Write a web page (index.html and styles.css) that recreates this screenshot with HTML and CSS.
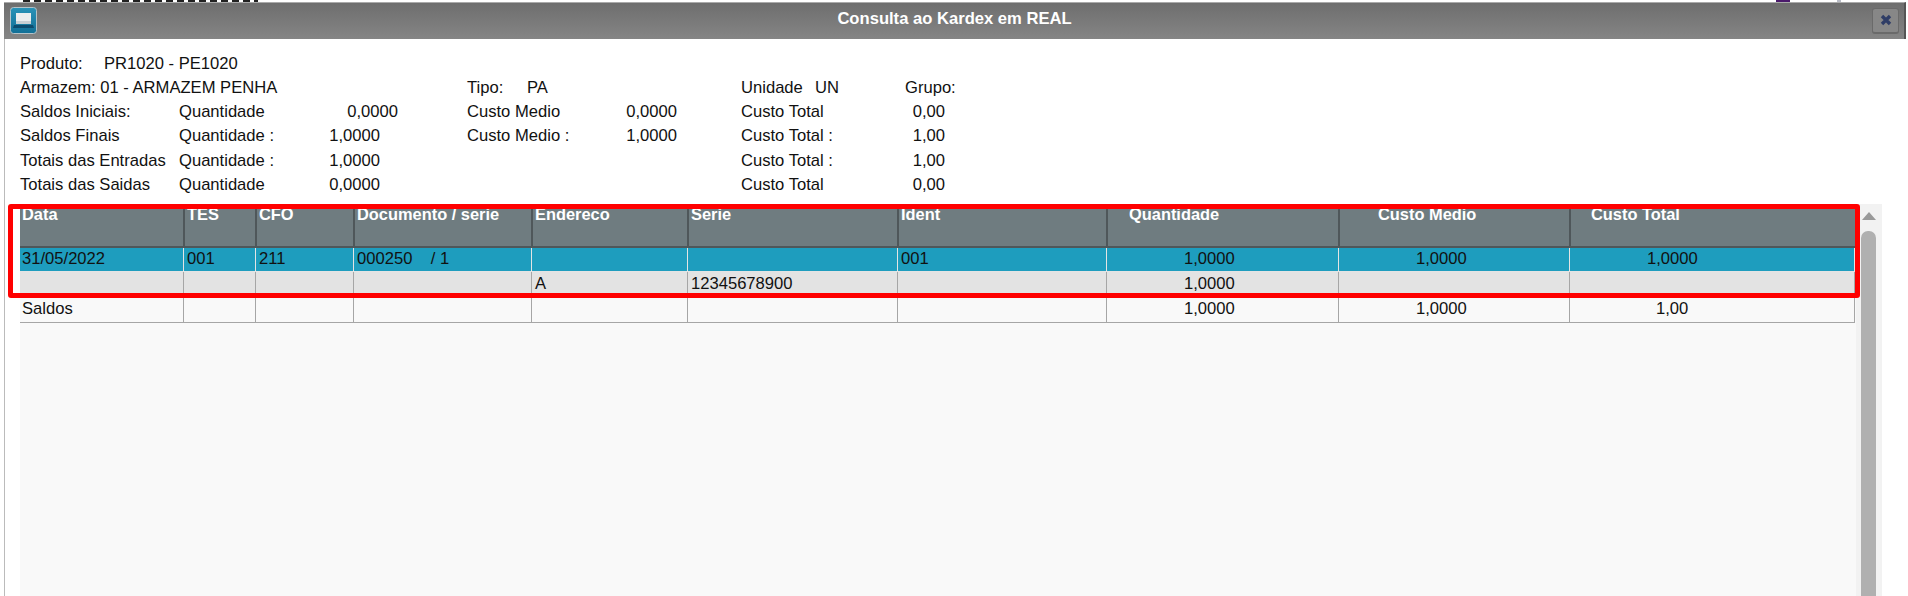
FILE: index.html
```html
<!DOCTYPE html>
<html lang="pt-BR">
  <head>
    <meta charset="UTF-8" />
    <title>Consulta ao Kardex em REAL</title>
    <link rel="stylesheet" href="styles.css">
  </head>
  <body>
    <div class="page-behind">
      <span class="behind-text"></span>
      <span class="behind-purple"></span>
      <span class="behind-mark"></span>
    </div>
    <div class="window">
      <div class="title-bar">
        <span class="app-icon">
          <svg width="27" height="27" viewBox="0 0 27 27">
            <defs>
              <linearGradient id="iconbg" x1="0" y1="0" x2="0" y2="1">
                <stop offset="0" stop-color="#2a93b8" />
                <stop offset="1" stop-color="#126f96" />
              </linearGradient>
            </defs>
            <rect x="0.5" y="0.5" width="26" height="26" rx="3" fill="url(#iconbg)" stroke="#b4c2c8" />
            <rect x="6" y="6" width="15" height="11" fill="#eceeef" />
            <rect x="6" y="14" width="15" height="3" fill="#c9d0d4" />
            <path d="M4 18h19l1 3H3z" fill="#0d4c6e" />
          </svg>
        </span>
        <span class="title-text">Consulta ao Kardex em REAL</span>
        <span class="close-btn">
          <svg width="12" height="12" viewBox="0 0 12 12">
            <path d="M2 2l8 8M10 2l-8 8" stroke="#2f3d66" stroke-width="3.4" />
          </svg>
        </span>
      </div>

      <div class="info">
        <div class="info-top">
          <span class="produto-label">Produto:</span><span>PR1020 - PE1020</span>
        </div>
        <div class="info-grid">
          <span class="wide">Armazem: 01 - ARMAZEM PENHA</span>
          <span><span class="tipo-label">Tipo:</span>PA</span>
          <span></span>
          <span><span class="unidade-label">Unidade</span>UN</span>
          <span class="grupo">Grupo:</span>

          <span>Saldos Iniciais:</span>
          <span>Quantidade</span>
          <span class="num val-far">0,0000</span>
          <span>Custo Medio</span>
          <span class="num val-mid">0,0000</span>
          <span>Custo Total</span>
          <span class="num">0,00</span>

          <span>Saldos Finais</span>
          <span>Quantidade :</span>
          <span class="num val-near">1,0000</span>
          <span>Custo Medio :</span>
          <span class="num val-mid">1,0000</span>
          <span>Custo Total :</span>
          <span class="num">1,00</span>

          <span>Totais das Entradas</span>
          <span>Quantidade :</span>
          <span class="num val-near">1,0000</span>
          <span></span>
          <span></span>
          <span>Custo Total :</span>
          <span class="num">1,00</span>

          <span>Totais das Saidas</span>
          <span>Quantidade</span>
          <span class="num val-near">0,0000</span>
          <span></span>
          <span></span>
          <span>Custo Total</span>
          <span class="num">0,00</span>
        </div>
      </div>

      <div class="grid-area">
        <div class="grid-scroll">
          <table class="kardex">
            <colgroup>
              <col class="c-data" /><col class="c-tes" /><col class="c-cfo" /><col class="c-doc" />
              <col class="c-end" /><col class="c-serie" /><col class="c-ident" />
              <col class="c-qtd" /><col class="c-medio" /><col class="c-total" />
            </colgroup>
            <thead>
              <tr>
                <th>Data</th>
                <th>TES</th>
                <th>CFO</th>
                <th>Documento / serie</th>
                <th>Endereco</th>
                <th>Serie</th>
                <th>Ident</th>
                <th class="th-qtd">Quantidade</th>
                <th class="th-medio">Custo Medio</th>
                <th class="th-total">Custo Total</th>
              </tr>
            </thead>
            <tbody>
              <tr class="row-selected">
                <td>31/05/2022</td>
                <td>001</td>
                <td>211</td>
                <td>000250 &nbsp;&nbsp; / 1</td>
                <td></td>
                <td></td>
                <td>001</td>
                <td class="num-cell">1,0000</td>
                <td class="num-cell">1,0000</td>
                <td class="num-cell">1,0000</td>
              </tr>
              <tr class="row-alt">
                <td></td>
                <td></td>
                <td></td>
                <td></td>
                <td>A</td>
                <td>12345678900</td>
                <td></td>
                <td class="num-cell">1,0000</td>
                <td></td>
                <td></td>
              </tr>
              <tr class="row-plain">
                <td>Saldos</td>
                <td></td>
                <td></td>
                <td></td>
                <td></td>
                <td></td>
                <td></td>
                <td class="num-cell">1,0000</td>
                <td class="num-cell">1,0000</td>
                <td class="num-cell total-short">1,00</td>
              </tr>
            </tbody>
          </table>
          <div class="highlight"></div>
        </div>
        <div class="scrollbar">
          <span class="arrow-up"></span>
          <span class="thumb"></span>
        </div>
      </div>
    </div>
  </body>
</html>
```

FILE: styles.css
```css
html, body {
  margin: 0;
  height: 596px;
  overflow: hidden;
  background: #fff;
}
body {
  font-family: "Liberation Sans", Arial, sans-serif;
  font-size: 16.6px;
  color: #111;
}

/* what shows of the page under the window */
.page-behind {
  height: 2px;
  display: flex;
}
.behind-text {
  width: 235px;
  margin-left: 23px;
  background: repeating-linear-gradient(90deg, #222 0 7px, #fff 7px 11px);
}
.behind-purple {
  width: 14px;
  margin-left: 1518px;
  background: #4b1a6b;
}
.behind-mark {
  width: 4px;
  margin-left: 47px;
  background: #b9bcc6;
}

.window {
  margin: 0 2px 0 4px;
  height: 594px;
  background: #fff;
  border-left: 1px solid #bbb;
  box-sizing: border-box;
}

/* title */
.title-bar {
  height: 37px;
  margin-left: -1px;
  background: linear-gradient(#6e6e6e, #858585);
  border-top: 1px solid #aaa;
  border-right: 2px solid #555;
  box-sizing: border-box;
  display: flex;
  align-items: center;
  justify-content: space-between;
  padding: 0 5px 1px 6px;
}
.app-icon {
  display: flex;
}
.title-text {
  color: #fff;
  font-weight: 700;
  margin-bottom: 3px;
}
.close-btn {
  width: 27px;
  height: 26px;
  box-sizing: border-box;
  display: flex;
  align-items: center;
  justify-content: center;
  border: 1px solid #6a6a6a;
  border-bottom-width: 2px;
  border-radius: 3px;
  background: #878787;
}

/* info */
.info {
  height: 165px;
  padding: 13px 0 0 15px;
  line-height: 24px;
  box-sizing: border-box;
}
.info-top {
  display: flex;
}
.produto-label {
  width: 84px;
}
.info-grid {
  display: grid;
  grid-template-columns: 159px 119px 169px 150px 124px 140px 64px;
  grid-auto-rows: 24.2px;
}
.wide {
  grid-column: span 3;
}
.tipo-label {
  display: inline-block;
  width: 60px;
}
.unidade-label {
  display: inline-block;
  width: 74px;
}
.grupo {
  padding-left: 24px;
  white-space: nowrap;
}
.num {
  text-align: right;
}
.val-far {
  padding-right: 69px;
}
.val-near {
  padding-right: 87px;
}
.val-mid {
  padding-right: 64px;
}

/* grid */
.grid-area {
  display: flex;
  padding-left: 15px;
  height: 392px;
}
.grid-scroll {
  position: relative;
  width: 1836px;
  background: #f9f9f9;
}
.kardex {
  border-collapse: separate;
  border-spacing: 0;
  table-layout: fixed;
  width: 1835px;
}
.c-data { width: 164px; }
.c-tes { width: 72px; }
.c-cfo { width: 98px; }
.c-doc { width: 178px; }
.c-end { width: 156px; }
.c-serie { width: 210px; }
.c-ident { width: 209px; }
.c-qtd { width: 232px; }
.c-medio { width: 231px; }
.c-total { width: 285px; }
.kardex th {
  height: 44px;
  box-sizing: border-box;
  padding: 0 0 0 2px;
  background: #6f7c80;
  color: #fff;
  font-size: 16.4px;
  font-weight: 700;
  text-align: left;
  vertical-align: top;
  line-height: 20px;
  border-left: 1px solid #4f575a;
  border-right: 1px solid #4f575a;
  border-bottom: 2px solid #4f575a;
}
.kardex th:first-child {
  padding-left: 2px;
  border-left: 0;
}
.kardex th:last-child {
  border-right: 0;
}
.kardex .th-qtd {
  padding-left: 21px;
}
.kardex .th-medio {
  padding-left: 38px;
}
.kardex .th-total {
  padding-left: 20px;
}
.kardex td {
  padding: 0 0 0 3px;
  border-right: 1px solid #a6a6a6;
  border-bottom: 1px solid #a6a6a6;
  box-sizing: border-box;
  white-space: nowrap;
}
.kardex td:first-child {
  padding-left: 2px;
}
.row-selected td {
  height: 24px;
  padding-bottom: 2px;
  background: #1e9dbe;
  border-color: #e4e4e4;
}
.row-alt td {
  height: 25px;
  padding-bottom: 1px;
  background: #e3e3e3;
}
.row-plain td {
  height: 26px;
  padding-bottom: 1px;
  background: #f9f9f9;
}
.kardex .num-cell {
  padding-left: 77px;
}
.kardex .total-short {
  padding-left: 86px;
}
.highlight {
  position: absolute;
  left: -12px;
  top: 0;
  width: 1852px;
  height: 94px;
  border: 5px solid #f00;
  border-radius: 3px;
  box-sizing: border-box;
}

/* scrollbar */
.scrollbar {
  width: 26px;
  background: #f2f2f2;
}
.arrow-up {
  display: block;
  width: 0;
  margin: 8px auto 0 6px;
  border-left: 7px solid transparent;
  border-right: 7px solid transparent;
  border-bottom: 8px solid #999;
}
.thumb {
  display: block;
  width: 15px;
  height: 380px;
  margin: 11px 0 0 5px;
  background: #b0b0b0;
  border-radius: 7px 7px 0 0;
}
```
